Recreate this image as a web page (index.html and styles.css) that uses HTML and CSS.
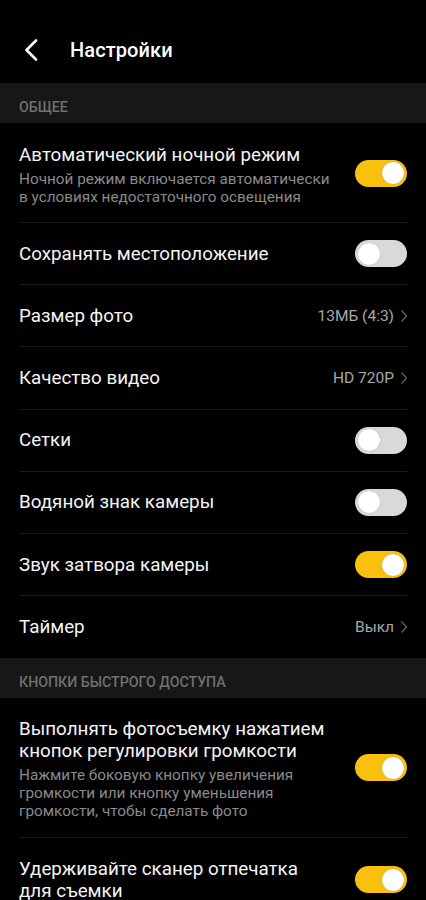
FILE: index.html
```html
<!DOCTYPE html>
<html lang="ru">
<head>
<meta charset="utf-8">
<link rel="stylesheet" href="styles.css">
</head>
<body>
<div class="screen">
  <header class="topbar">
    <svg class="back" width="14" height="22" viewBox="0 0 14 22"><path d="M12 1.5 L2.5 11 L12 20.5" fill="none" stroke="#fff" stroke-width="2.6" stroke-linecap="round" stroke-linejoin="round"/></svg>
    <h1 class="title">Настройки</h1>
  </header>

  <div class="section">ОБЩЕЕ</div>
  <div class="list">
    <div class="row tall">
      <div class="text">
        <div class="label">Автоматический ночной режим</div>
        <div class="sub">Ночной режим включается автоматически<br>в условиях недостаточного освещения</div>
      </div>
      <span class="toggle on"><span class="knob"></span></span>
    </div>
    <div class="row">
      <div class="text"><div class="label">Сохранять местоположение</div></div>
      <span class="toggle"><span class="knob"></span></span>
    </div>
    <div class="row">
      <div class="text"><div class="label">Размер фото</div></div>
      <span class="value">13МБ (4:3)<svg class="chev" width="8" height="14" viewBox="0 0 8 14"><path d="M1.5 1.5 L6.5 7 L1.5 12.5" fill="none" stroke="#5c5c5c" stroke-width="1.4"/></svg></span>
    </div>
    <div class="row">
      <div class="text"><div class="label">Качество видео</div></div>
      <span class="value">HD 720P<svg class="chev" width="8" height="14" viewBox="0 0 8 14"><path d="M1.5 1.5 L6.5 7 L1.5 12.5" fill="none" stroke="#5c5c5c" stroke-width="1.4"/></svg></span>
    </div>
    <div class="row">
      <div class="text"><div class="label">Сетки</div></div>
      <span class="toggle"><span class="knob"></span></span>
    </div>
    <div class="row">
      <div class="text"><div class="label">Водяной знак камеры</div></div>
      <span class="toggle"><span class="knob"></span></span>
    </div>
    <div class="row">
      <div class="text"><div class="label">Звук затвора камеры</div></div>
      <span class="toggle on"><span class="knob"></span></span>
    </div>
    <div class="row last">
      <div class="text"><div class="label">Таймер</div></div>
      <span class="value">Выкл<svg class="chev" width="8" height="14" viewBox="0 0 8 14"><path d="M1.5 1.5 L6.5 7 L1.5 12.5" fill="none" stroke="#5c5c5c" stroke-width="1.4"/></svg></span>
    </div>
  </div>

  <div class="section">КНОПКИ БЫСТРОГО ДОСТУПА</div>
  <div class="list">
    <div class="row xtall">
      <div class="text">
        <div class="label">Выполнять фотосъемку нажатием<br>кнопок регулировки громкости</div>
        <div class="sub">Нажмите боковую кнопку увеличения<br>громкости или кнопку уменьшения<br>громкости, чтобы сделать фото</div>
      </div>
      <span class="toggle on"><span class="knob"></span></span>
    </div>
    <div class="row end">
      <div class="text">
        <div class="label">Удерживайте сканер отпечатка<br>для съемки</div>
      </div>
      <span class="toggle on"><span class="knob"></span></span>
    </div>
  </div>
</div>
</body>
</html>
```
FILE: styles.css
```css
* { box-sizing: border-box; margin: 0; padding: 0; }
html, body { background: #000; }
body {
  font-family: Roboto, "Noto Sans", sans-serif;
  color: #fff;
  width: 426px;
  height: 900px;
  overflow: hidden;
}
.screen { display: flex; flex-direction: column; }
.topbar {
  height: 83px;
  display: flex;
  align-items: center;
  padding-left: 24px;
  padding-top: 17px;
  background: #000;
}
.back { display: block; margin-right: 32px; }
.title {
  font-size: 20px;
  font-weight: 500;
  color: #fff;
  letter-spacing: 0.1px;
}
.section {
  height: 40px;
  background: #171717;
  display: flex;
  align-items: center;
  padding-left: 19px;
  font-size: 14.2px;
  font-weight: 500;
  color: #707070;
  padding-top: 8px;
}
.list { display: flex; flex-direction: column; padding: 0 19px; }
.row {
  height: 62.2px;
  display: flex;
  align-items: center;
  justify-content: space-between;
  border-bottom: 1px solid #1a1a1a;
}
.row.last { border-bottom: none; }
.row.tall { height: 100px; padding-top: 5px; }
.row.tall .toggle { margin-top: -4px; }
.row.xtall { height: 140px; padding-top: 2px; }
.row.xtall .toggle { margin-top: -2px; }
.row.end { height: 82px; border-bottom: none; padding-top: 1px; }
.text { display: flex; flex-direction: column; }
.label {
  font-size: 18.8px;
  line-height: 22px;
  color: #f4f4f4;
}
.sub {
  font-size: 15.3px;
  line-height: 18px;
  color: #8a8a8a;
  margin-top: 4px;
}
.value {
  display: flex;
  align-items: center;
  gap: 6px;
  font-size: 15.5px;
  color: #a8a8a8;
  margin-right: -1px;
}
.chev { display: block; }
.toggle {
  flex: none;
  width: 52px;
  height: 27px;
  border-radius: 14px;
  background: #d9d9d9;
  display: flex;
  align-items: center;
  justify-content: flex-start;
  padding: 0 3px;
}
.toggle.on {
  background: #f9c00e;
  justify-content: flex-end;
}
.knob {
  width: 22px;
  height: 22px;
  border-radius: 50%;
  background: #fff;
  box-shadow: 0 0 1px rgba(0,0,0,0.35);
}
```
